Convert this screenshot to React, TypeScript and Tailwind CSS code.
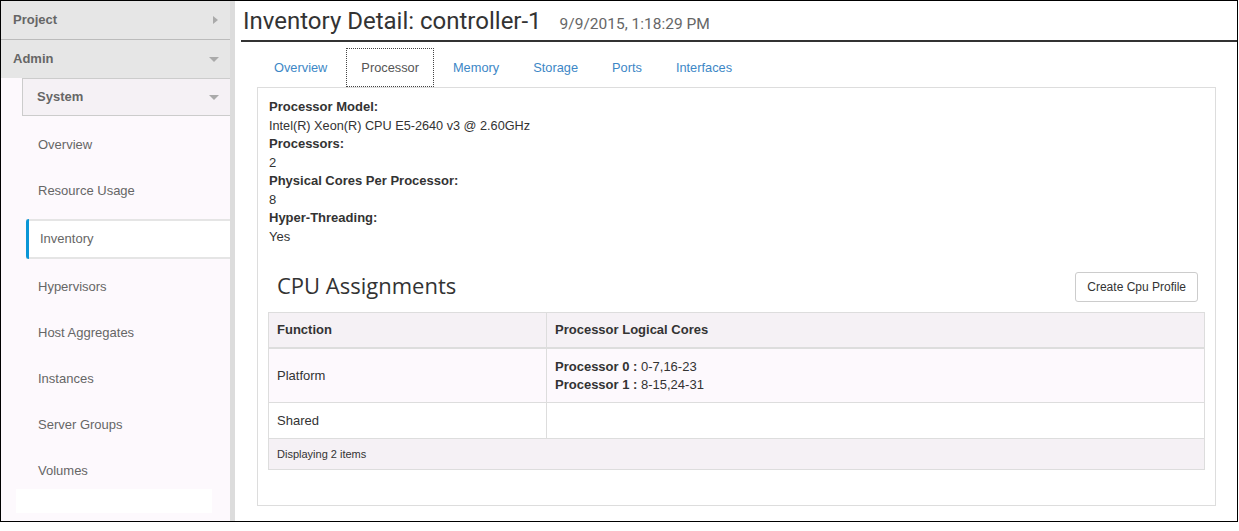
import React from 'react'

const navItems = [
  'Overview',
  'Resource Usage',
  'Inventory',
  'Hypervisors',
  'Host Aggregates',
  'Instances',
  'Server Groups',
  'Volumes',
]

const tabs = ['Overview', 'Processor', 'Memory', 'Storage', 'Ports', 'Interfaces']

function DownCaret() {
  return <span className="w-0 h-0 border-t-[5px] border-x-[5px] border-x-transparent border-t-[#aaa]" />
}

export default function App() {
  return (
    <div className="w-[1238px] h-[522px] border border-black flex overflow-hidden bg-white font-['Liberation_Sans',Arial,sans-serif]">
      {/* Sidebar */}
      <aside className="w-[229px] shrink-0 bg-[#fdf9fd] flex flex-col">
        <div className="h-[39px] bg-[#e6e6e6] border-b border-[#bbb] flex items-center justify-between pl-[12px] pr-[12px]">
          <span className="text-[13px] font-bold text-[#666]">Project</span>
          <span className="w-0 h-0 border-l-[5px] border-y-[4px] border-y-transparent border-l-[#aaa]" />
        </div>
        <div className="h-[38px] bg-[#e6e6e6] flex items-center justify-between pl-[12px] pr-[11px]">
          <span className="text-[13px] font-bold text-[#666]">Admin</span>
          <DownCaret />
        </div>
        <div className="ml-[21px] h-[38px] border border-r-0 border-[#ccc] bg-[#f5f1f5] flex items-center justify-between pl-[14px] pr-[11px]">
          <span className="text-[13px] font-bold text-[#666]">System</span>
          <DownCaret />
        </div>
        <nav className="pt-[6px] flex flex-col">
          {navItems.map((item) =>
            item === 'Inventory' ? (
              <div
                key={item}
                className="relative ml-[25px] my-[5px] h-[40px] bg-white border-y-2 border-[#e5e5e5] flex items-center pl-[14px] text-[13px] text-[#666]"
              >
                <span className="absolute left-0 top-[-2px] bottom-[-2px] w-[3px] rounded-l-sm bg-[#0a96d6]" />
                {item}
              </div>
            ) : (
              <div key={item} className="h-[46px] flex items-center pl-[37px] text-[13px] text-[#666]">
                {item}
              </div>
            )
          )}
        </nav>
        <div className="-mt-[5px] ml-[15px] w-[196px] h-[24px] bg-white" />
      </aside>
      <div className="w-[5px] shrink-0 bg-[#dcdcdc]" />

      {/* Main */}
      <main className="flex-1 pl-[6px] flex flex-col">
        <div className="h-[41px] border-b-2 border-[#333] flex items-baseline gap-[18px] pl-[2px] pt-[8px]">
          <h1 className="text-[24px] text-[#333] font-['Roboto',sans-serif] leading-none">
            Inventory Detail: controller-1
          </h1>
          <span className="text-[15.5px] text-[#666] font-['Roboto',sans-serif] leading-none">
            9/9/2015, 1:18:29 PM
          </span>
        </div>

        <div className="ml-[16px] mr-[21px] mt-[6px]">
          <ul className="flex pl-[2px] h-[39px] text-[12.8px]">
            {tabs.map((t) => (
              <li
                key={t}
                className={
                  t === 'Processor'
                    ? 'h-[39px] px-[14px] mr-[4px] pt-[1px] flex items-center border border-dotted border-[#444] text-[#555]'
                    : 'h-[39px] px-[15px] mr-[4px] pt-[1px] flex items-center text-[#3d87c6]'
                }
              >
                {t}
              </li>
            ))}
          </ul>

          <div className="h-[419px] border border-[#ddd] pt-[10px] px-[10px]">
            <div className="pl-[1px] text-[13px] leading-[18.5px] text-[#333]">
              <div className="font-bold">Processor Model:</div>
              <div className="text-[12.7px]">Intel(R) Xeon(R) CPU E5-2640 v3 @ 2.60GHz</div>
              <div className="font-bold">Processors:</div>
              <div>2</div>
              <div className="font-bold">Physical Cores Per Processor:</div>
              <div>8</div>
              <div className="font-bold">Hyper-Threading:</div>
              <div>Yes</div>
            </div>

            <div className="mt-[26px] mb-[10px] flex items-center justify-between">
              <h2 className="pl-[9px] -mt-[3px] text-[22px] text-[#333] font-['Open_Sans',sans-serif]">
                CPU Assignments
              </h2>
              <button className="mr-[7px] h-[30px] px-[11px] bg-white border border-[#ccc] rounded-[3px] text-[12px] text-[#333]">
                Create Cpu Profile
              </button>
            </div>

            <div className="border border-[#ddd] text-[13px] text-[#333]">
              <div className="h-[36px] grid grid-cols-[278px_1fr] bg-[#f5f1f5] border-b-2 border-[#ddd] font-bold">
                <div className="flex items-center px-[8px] border-r border-[#ddd]">Function</div>
                <div className="flex items-center px-[8px]">Processor Logical Cores</div>
              </div>
              <div className="h-[54px] grid grid-cols-[278px_1fr] bg-[#fdf9fd] border-b border-[#ddd]">
                <div className="flex items-center px-[8px] border-r border-[#ddd]">Platform</div>
                <div className="flex flex-col justify-center px-[8px] leading-[18px]">
                  <div>
                    <b>Processor 0 :</b> 0-7,16-23
                  </div>
                  <div>
                    <b>Processor 1 :</b> 8-15,24-31
                  </div>
                </div>
              </div>
              <div className="h-[36px] grid grid-cols-[278px_1fr] bg-white border-b border-[#ddd]">
                <div className="flex items-center px-[8px] border-r border-[#ddd]">Shared</div>
                <div />
              </div>
              <div className="h-[30px] flex items-center px-[8px] bg-[#f5f1f5] text-[11px]">
                Displaying 2 items
              </div>
            </div>
          </div>
        </div>
      </main>
    </div>
  )
}
